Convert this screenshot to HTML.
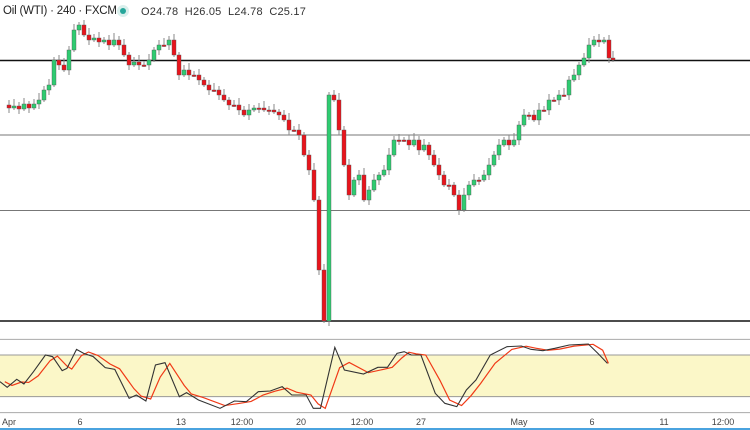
<!DOCTYPE html>
<html><head><meta charset="utf-8"><style>
html,body{margin:0;padding:0;background:#fff;width:750px;height:430px;overflow:hidden;font-family:"Liberation Sans",sans-serif}
#wrap{position:relative;width:750px;height:430px}
.hdr{position:absolute;left:3px;top:5px;font-size:11.5px;color:#222;white-space:nowrap;letter-spacing:-0.2px}
.ohlc{position:absolute;left:141px;top:6px;font-size:11px;color:#333;white-space:nowrap;letter-spacing:0.2px}
.dot{position:absolute;left:117px;top:5px;width:12px;height:12px;border-radius:50%;background:#d9efec}
.dot:after{content:"";position:absolute;left:3px;top:3px;width:6px;height:6px;border-radius:50%;background:#26a69a}
.lbl{position:absolute;top:417px;font-size:9px;color:#444;transform:translateX(-50%)}
</style></head><body><div id="wrap">
<svg id="main" width="750" height="330" style="position:absolute;left:0;top:0">
<line x1="0" y1="60.5" x2="750" y2="60.5" stroke="#111" stroke-width="1.5"/>
<line x1="0" y1="135" x2="750" y2="135" stroke="#777" stroke-width="1"/>
<line x1="0" y1="210.5" x2="750" y2="210.5" stroke="#777" stroke-width="1"/>
<line x1="0" y1="321" x2="750" y2="321" stroke="#111" stroke-width="1.5"/>
<g id="c"></g>
</svg>
<div class="hdr">Oil (WTI) · 240 · FXCM</div>
<div class="dot"></div>
<div class="ohlc">O24.78&nbsp; H26.05&nbsp; L24.78&nbsp; C25.17</div>
<svg width="750" height="100" viewBox="0 0 1568 300" preserveAspectRatio="none" style="position:absolute;left:0;top:330px">
<line x1="0" y1="28" x2="1568" y2="28" stroke="#aaa" stroke-width="1" vector-effect="non-scaling-stroke"/>
<rect x="0" y="75" width="1568" height="125" fill="#fbf7c8"/>
<line x1="0" y1="75" x2="1568" y2="75" stroke="#999" stroke-width="1" vector-effect="non-scaling-stroke"/>
<line x1="0" y1="200" x2="1568" y2="200" stroke="#999" stroke-width="1" vector-effect="non-scaling-stroke"/>
<line x1="0" y1="248" x2="1568" y2="248" stroke="#aaa" stroke-width="1" vector-effect="non-scaling-stroke"/>
<polyline id="red" fill="none" stroke="#f03a17" stroke-width="1.2" vector-effect="non-scaling-stroke"/>
<polyline id="blk" fill="none" stroke="#333" stroke-width="1.1" vector-effect="non-scaling-stroke"/>
<line x1="0" y1="297" x2="1568" y2="297" stroke="#4aa3df" stroke-width="2" vector-effect="non-scaling-stroke"/>
</svg>
<div class="lbl" style="left:9px">Apr</div>
<div class="lbl" style="left:80px">6</div>
<div class="lbl" style="left:181px">13</div>
<div class="lbl" style="left:242px">12:00</div>
<div class="lbl" style="left:301px">20</div>
<div class="lbl" style="left:362px">12:00</div>
<div class="lbl" style="left:421px">27</div>
<div class="lbl" style="left:519px">May</div>
<div class="lbl" style="left:592px">6</div>
<div class="lbl" style="left:664px">11</div>
<div class="lbl" style="left:723px">12:00</div>
</div>
<script>
var p=[[0,105],[5,108],[10,106],[15,109],[20,104],[25,108],[30,104],[35,100],[40,90],[45,85],[50,60],[55,65],[60,70],[65,50],[70,30],[75,25],[80,35],[85,40],[90,38],[95,42],[100,40],[105,45],[110,40],[115,45],[120,55],[125,65],[130,62],[135,65],[140,65],[145,60],[150,50],[155,45],[160,45],[165,40],[170,55],[175,75],[180,70],[185,75],[190,75],[195,80],[200,85],[205,90],[210,90],[215,95],[220,100],[225,105],[230,105],[235,110],[240,115],[245,110],[250,108],[255,108],[260,110],[265,110],[270,112],[275,115],[280,120],[285,130],[290,130],[295,135],[300,155],[305,170],[310,200],[315,270],[320,321],[325,95],[330,100],[335,130],[340,165],[345,195],[350,180],[355,175],[360,200],[365,190],[370,180],[375,175],[380,170],[385,155],[390,140],[395,140],[400,140],[405,145],[410,140],[415,150],[420,145],[425,155],[430,165],[435,175],[440,185],[445,185],[450,195],[455,210],[460,195],[465,185],[470,180],[475,180],[480,175],[485,165],[490,155],[495,145],[500,140],[505,145],[510,140],[515,125],[520,115],[525,115],[530,120],[535,110],[540,110],[545,100],[550,100],[555,95],[560,95],[565,80],[570,75],[575,65],[580,58],[585,45],[590,40],[595,42],[600,40],[605,58],[609,60]];
var s='';
for(var i=1;i<p.length;i++){var x=p[i][0]+2,o=p[i-1][1],c=p[i][1],t=Math.min(o,c),b=Math.max(o,c),up=c<o;
var hw=3+((i*7)%5),lw=2+((i*3)%6);
s+='<line x1="'+(x+2)+'" x2="'+(x+2)+'" y1="'+(t-hw)+'" y2="'+(b+lw)+'" stroke="#888" stroke-width="1"/>';
s+='<rect x="'+x+'" y="'+t+'" width="4" height="'+Math.max(b-t,1.5)+'" fill="'+(up?'#2ecc71':'#e8141c')+'" stroke="#555" stroke-width="0.4"/>';}
document.getElementById('c').innerHTML=s;
var k=[[0,155],[15,172],[35,148],[50,162],[70,125],[95,75],[110,80],[130,122],[140,115],[160,58],[175,70],[195,80],[220,113],[240,118],[270,205],[285,195],[305,213],[325,105],[345,98],[375,200],[390,188],[415,210],[460,235],[490,213],[515,215],[540,185],[565,183],[590,170],[610,195],[640,195],[655,235],[670,235],[700,52],[720,120],[760,132],[790,112],[810,112],[830,70],[845,65],[860,75],[880,75],[910,190],[930,220],[955,230],[975,180],[995,150],[1025,75],[1060,50],[1090,48],[1110,58],[1135,62],[1160,55],[1190,45],[1230,42],[1250,70],[1270,100]];
document.getElementById('blk').setAttribute('points',k.map(function(a){return a[0]+','+a[1]}).join(' '));
document.getElementById('red').setAttribute('points',k.map(function(a,i){var y=a[1];if(i>0&&i<k.length-1)y=(k[i-1][1]+2*a[1])/3;return Math.min(a[0]+10,1272)+','+y}).join(' '));
</script>
</body></html>
